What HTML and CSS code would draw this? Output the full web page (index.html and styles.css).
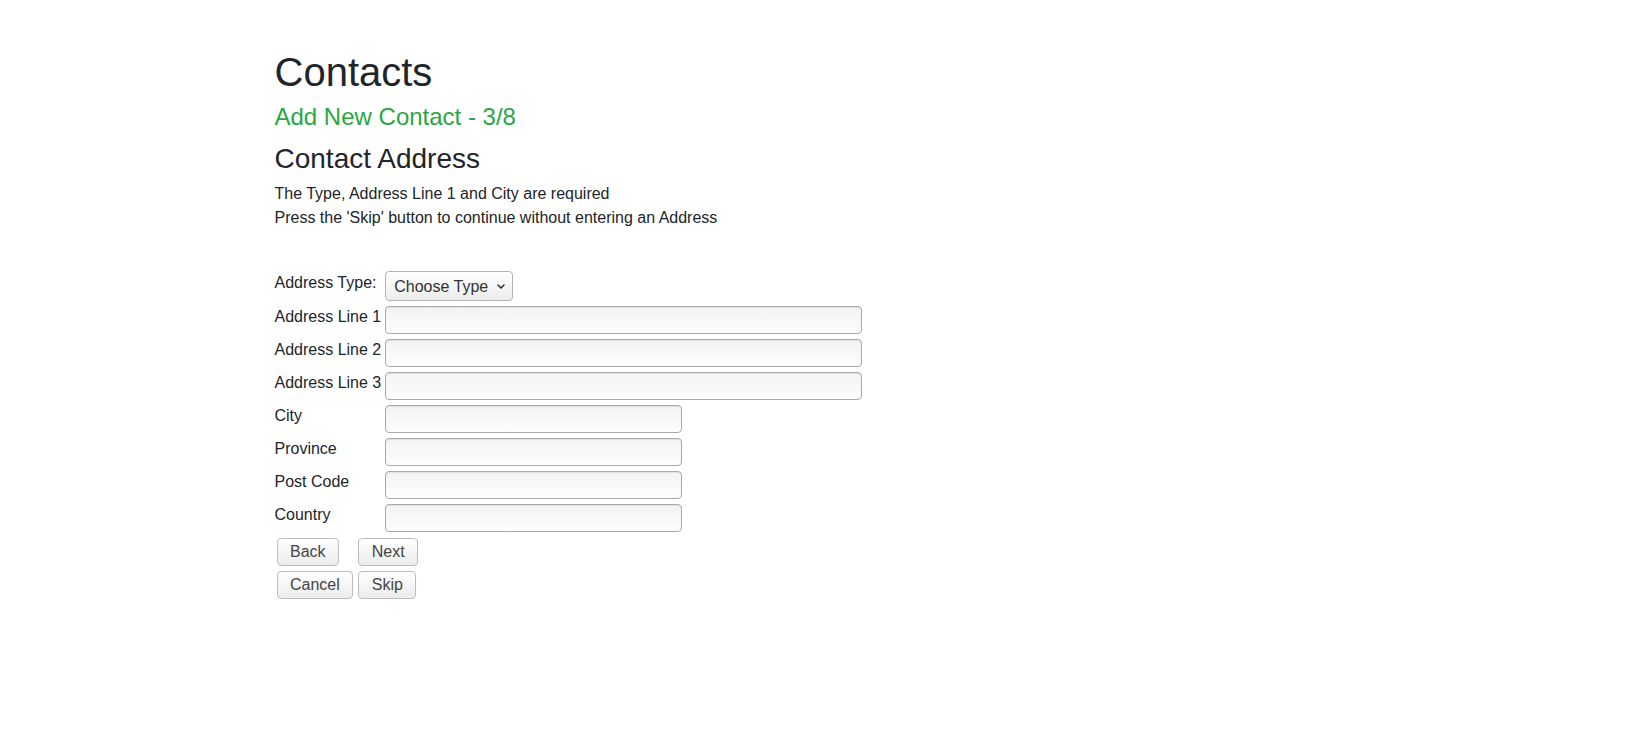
FILE: index.html
```html
<!DOCTYPE html>
<html lang="en">
<head>
<meta charset="utf-8">
<title>Contacts</title>
<link rel="stylesheet" href="styles.css">
</head>
<body>
<div class="page">
  <h1 class="title">Contacts</h1>
  <h4 class="step">Add New Contact - 3/8</h4>
  <h3 class="section">Contact Address</h3>
  <p class="intro">The Type, Address Line 1 and City are required<br>Press the 'Skip' button to continue without entering an Address</p>

  <form class="address-form">
    <div class="fields">
      <label class="field-label" for="type">Address Type:</label>
      <div class="field-cell">
        <div class="select-wrap">
          <select id="type" class="select">
            <option>Choose Type</option>
          </select>
          <svg class="select-arrow" width="8" height="5" viewBox="0 0 8 5" aria-hidden="true">
            <path d="M1 1 L4 4 L7 1" fill="none" stroke="#333" stroke-width="1.6" stroke-linecap="round" stroke-linejoin="round"/>
          </svg>
        </div>
      </div>

      <label class="field-label" for="l1">Address Line 1</label>
      <div class="field-cell"><input id="l1" class="input input-wide" type="text"></div>

      <label class="field-label" for="l2">Address Line 2</label>
      <div class="field-cell"><input id="l2" class="input input-wide" type="text"></div>

      <label class="field-label" for="l3">Address Line 3</label>
      <div class="field-cell"><input id="l3" class="input input-wide" type="text"></div>

      <label class="field-label" for="city">City</label>
      <div class="field-cell"><input id="city" class="input input-mid" type="text"></div>

      <label class="field-label" for="prov">Province</label>
      <div class="field-cell"><input id="prov" class="input input-mid" type="text"></div>

      <label class="field-label" for="post">Post Code</label>
      <div class="field-cell"><input id="post" class="input input-mid" type="text"></div>

      <label class="field-label" for="country">Country</label>
      <div class="field-cell"><input id="country" class="input input-mid" type="text"></div>
    </div>

    <div class="actions">
      <button type="button" class="btn">Back</button>
      <button type="button" class="btn">Next</button>
      <button type="button" class="btn">Cancel</button>
      <button type="button" class="btn">Skip</button>
    </div>
  </form>
</div>
</body>
</html>
```

FILE: styles.css
```css
* {
  box-sizing: border-box;
}

body {
  margin: 0;
  font-family: "Liberation Sans", Arial, Helvetica, sans-serif;
  font-size: 16px;
  line-height: 1.5;
  color: #212529;
  background: #fff;
}

.page {
  max-width: 1140px;
  margin: 0 auto;
  padding: 48px 30px 0;
}

.title,
.step,
.section {
  margin: 0 0 8px;
  font-weight: 400;
  line-height: 1.2;
}

.title {
  font-size: 40px;
  margin-bottom: 7px;
}

.step {
  font-size: 24px;
  color: #28a745;
  margin-bottom: 10px;
}

.section {
  font-size: 28px;
  margin-bottom: 7px;
}

.intro {
  margin: 0;
}

.address-form {
  padding-top: 41px;
}

.fields {
  display: grid;
  grid-template-columns: max-content max-content;
  column-gap: 4px;
  row-gap: 4px;
  align-items: start;
}

.field-label {
  display: block;
  line-height: 24px;
  color: #212529;
}

.field-cell {
  display: flex;
}

.select-wrap {
  position: relative;
  display: inline-flex;
}

.select {
  -webkit-appearance: none;
  appearance: none;
  height: 30px;
  font-family: inherit;
  font-size: 16px;
  color: #333;
  padding: 0 23px 0 8px;
  border: 1px solid #b3b3b3;
  border-radius: 4px;
  background: linear-gradient(to bottom, #ffffff, #ececec);
}

.select-arrow {
  position: absolute;
  right: 8px;
  top: 13px;
  pointer-events: none;
}

.input {
  height: 28px;
  margin-top: 1px;
  font-family: inherit;
  font-size: 16px;
  padding: 0 6px;
  border: 1px solid #aaaaaa;
  border-radius: 4px;
  background: linear-gradient(to bottom, #f3f3f3, #fdfdfd);
  box-shadow: inset 0 1px 1px rgba(0, 0, 0, 0.08);
}

.input-wide {
  width: 477px;
}

.input-mid {
  width: 297px;
}

.actions {
  display: grid;
  grid-template-columns: max-content max-content;
  column-gap: 5px;
  row-gap: 5px;
  justify-items: start;
  margin: 6px 0 0 2px;
}

.btn {
  height: 28px;
  padding: 0 12.5px;
  font-family: inherit;
  font-size: 16px;
  color: #454545;
  border: 1px solid #bdbdbd;
  border-radius: 4px;
  background: linear-gradient(to bottom, #ffffff, #ececec);
  cursor: pointer;
}
```
